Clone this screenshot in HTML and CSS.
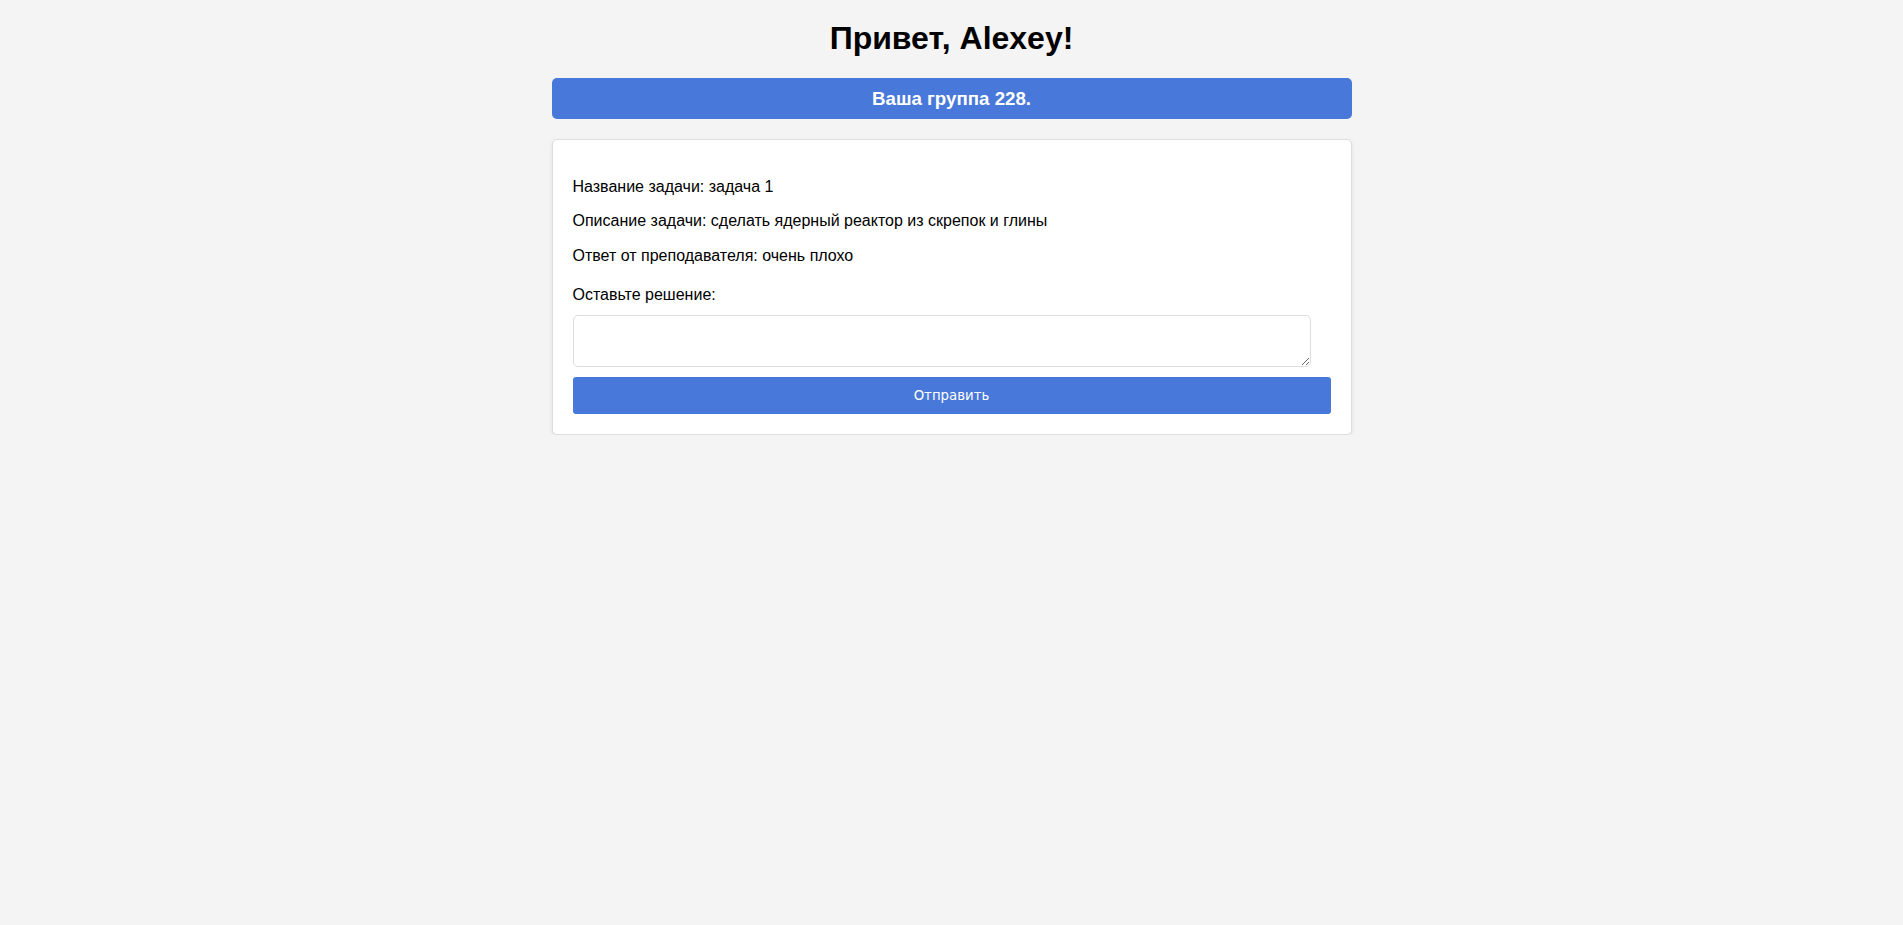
FILE: index.html
```html
<!DOCTYPE html>
<html lang="ru">
<head>
<meta charset="utf-8">
<title>Задачи</title>
<link rel="stylesheet" href="styles.css">
</head>
<body>
<div class="page">
  <h1 class="greeting">Привет, Alexey!</h1>
  <div class="group-bar">Ваша группа 228.</div>
  <div class="task-card">
    <p class="task-line">Название задачи: задача 1</p>
    <p class="task-line">Описание задачи: сделать ядерный реактор из скрепок и глины</p>
    <p class="task-line">Ответ от преподавателя: очень плохо</p>
    <form class="solution-form">
      <label class="solution-label" for="solution">Оставьте решение:</label>
      <textarea id="solution" class="solution-input"></textarea>
      <button type="button" class="submit-btn">Отправить</button>
    </form>
  </div>
</div>
</body>
</html>
```

FILE: styles.css
```css
html, body {
  margin: 0;
  padding: 0;
  background: #f4f4f4;
}
body {
  font-family: "Liberation Sans", Arial, sans-serif;
  color: #000;
}
.page {
  width: 800px;
  margin: 0 auto;
  padding-top: 20px;
  display: flex;
  flex-direction: column;
}
.greeting {
  margin: 0 0 21px;
  font-size: 32px;
  font-weight: bold;
  text-align: center;
  line-height: 37px;
}
.group-bar {
  background: #4878d9;
  color: #fff;
  font-weight: bold;
  font-size: 18.72px;
  line-height: 21px;
  padding: 10px 0;
  text-align: center;
  border-radius: 5px;
  margin-bottom: 20px;
}
.task-card {
  background: #fff;
  border: 1px solid #ddd;
  border-radius: 5px;
  box-shadow: 0 2px 4px rgba(0, 0, 0, 0.08);
  padding: 22px 20px 20px;
}
.task-line {
  margin: 16px 0;
  font-size: 16px;
  line-height: 18.4px;
}
.solution-form {
  display: flex;
  flex-direction: column;
  align-items: flex-start;
}
.solution-label {
  font-size: 16px;
  line-height: 18px;
  margin-top: 5px;
  margin-bottom: 11px;
}
.solution-input {
  box-sizing: border-box;
  width: 738px;
  height: 52px;
  padding: 10px;
  border: 1px solid #ddd;
  border-radius: 5px;
  font-family: "Liberation Mono", monospace;
  font-size: 13px;
  margin: 0 0 10px;
}
.submit-btn {
  width: 100%;
  height: 37px;
  background: #4878d9;
  color: #fff;
  border: none;
  border-radius: 3px;
  font-family: "DejaVu Sans", sans-serif;
  font-size: 13.33px;
  cursor: pointer;
}
```
